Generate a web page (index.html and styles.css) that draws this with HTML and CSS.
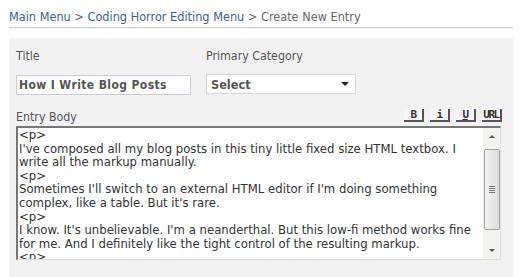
FILE: index.html
```html
<!DOCTYPE html>
<html>
<head>
  <title>Create New Entry</title>
  <link rel="stylesheet" href="styles.css">
</head>
<body>
  <div class="crumbs">
    <a href="#">Main Menu</a> &gt; <a href="#">Coding Horror Editing Menu</a> &gt; <span>Create New Entry</span>
  </div>
  <div class="panel">
    <div class="row">
      <div class="field title-field">
        <label>Title</label>
        <input class="title-input" value="How I Write Blog Posts" />
      </div>
      <div class="field">
        <label>Primary Category</label>
        <div class="select">Select <span class="caret"></span></div>
      </div>
    </div>
    <div class="body-head">
      <label>Entry Body</label>
      <div class="tools">
        <span class="tool">B</span>
        <span class="tool">i</span>
        <span class="tool under">U</span>
        <span class="tool">URL</span>
      </div>
    </div>
    <div class="editor">
      <textarea class="entry">&lt;p&gt;
I've composed all my blog posts in this tiny little fixed size HTML textbox. I write all the markup manually.
&lt;p&gt;
Sometimes I'll switch to an external HTML editor if I'm doing something complex, like a table. But it's rare.
&lt;p&gt;
I know. It's unbelievable. I'm a neanderthal. But this low-fi method works fine for me. And I definitely like the tight control of the resulting markup.
&lt;p&gt;
</textarea>
      <div class="scroll">
        <div class="arrow up"></div>
        <div class="thumb"><span class="grip"></span></div>
        <div class="arrow down"></div>
      </div>
    </div>
  </div>
</body>
</html>
```

FILE: styles.css
```css
body { margin: 0; padding: 0 8px 0 9px; font-family: "DejaVu Sans Condensed", "DejaVu Sans", sans-serif; font-stretch: condensed; font-size: 12.3px; color: #555; background: #fff; }
.crumbs { padding: 9px 0 3px; border-bottom: 1px solid #ccc; font-size: 12.6px; color: #666; }
.crumbs a { color: #3d5f86; text-decoration: none; }
.crumbs span { color: #666; }
.panel { margin-top: 10px; background: #f2f2f2; padding: 11px 8px 20px 7px; height: 220px; }
.row { display: flex; gap: 15px; }
.field { display: flex; flex-direction: column; }
.title-field { width: 175px; }
label { display: block; line-height: 15px; color: #555; }
.title-input { margin-top: 11px; height: 20px; box-sizing: border-box; border: 1px solid #c9ccd6; padding: 0 2px; font: bold 12px "DejaVu Sans Condensed", "DejaVu Sans", sans-serif; font-stretch: condensed; letter-spacing: 0.4px; color: #555; background: #fff; width: 175px; }
.select { margin-top: 10px; width: 150px; height: 20px; box-sizing: border-box; border: 1px solid #d4d6de; background: #fff; padding: 2px 4px; font-size: 12.6px; font-weight: bold; color: #555; display: flex; justify-content: space-between; align-items: center; }
.caret { width: 0; height: 0; border-left: 4px solid transparent; border-right: 4px solid transparent; border-top: 4px solid #222; margin-right: 2px; }
.body-head { display: flex; justify-content: space-between; align-items: flex-end; margin-top: 14px; width: 486px; }
.tools { display: flex; gap: 6px; padding-bottom: 3px; }
.tool { display: block; width: 20px; height: 13px; box-sizing: border-box; border-right: 2px solid #555; border-bottom: 2px solid #555; background: #f7f7f7; font: bold 11px "DejaVu Sans Mono", monospace; color: #333; text-align: center; line-height: 11px; letter-spacing: -1.5px; }
.tool.under { text-decoration: underline; }
.editor { display: flex; width: 485px; height: 134px; margin-top: 1px; box-sizing: border-box; border-top: 2px solid #777; border-left: 2px solid #777; border-right: 1px solid #ddd; border-bottom: 1px solid #ddd; background: #fff; }
.entry { flex: 1; border: none; resize: none; overflow: hidden; padding: 1px 8px 0 1px; margin: 0; font: 11.7px "DejaVu Sans", sans-serif; line-height: 13.6px; color: #333; outline: none; }
.scroll { width: 16px; display: flex; flex-direction: column; background: #f3f3f0; border-left: 1px solid #eee; }
.arrow { height: 17px; position: relative; }
.arrow::after { content: ""; position: absolute; left: 5px; top: 7px; border-left: 3px solid transparent; border-right: 3px solid transparent; }
.arrow.up::after { border-bottom: 3px solid #555; }
.arrow.down::after { border-top: 3px solid #555; }
.thumb { flex: 1; margin: 4px 0 12px; border: 1px solid #a5a5a5; border-radius: 2px; background: linear-gradient(to right, #f4f4f4, #dcdcdc); display: flex; align-items: center; justify-content: center; }
.grip { width: 6px; height: 7px; background: repeating-linear-gradient(to bottom, #777 0 1px, transparent 1px 2px); }
```
